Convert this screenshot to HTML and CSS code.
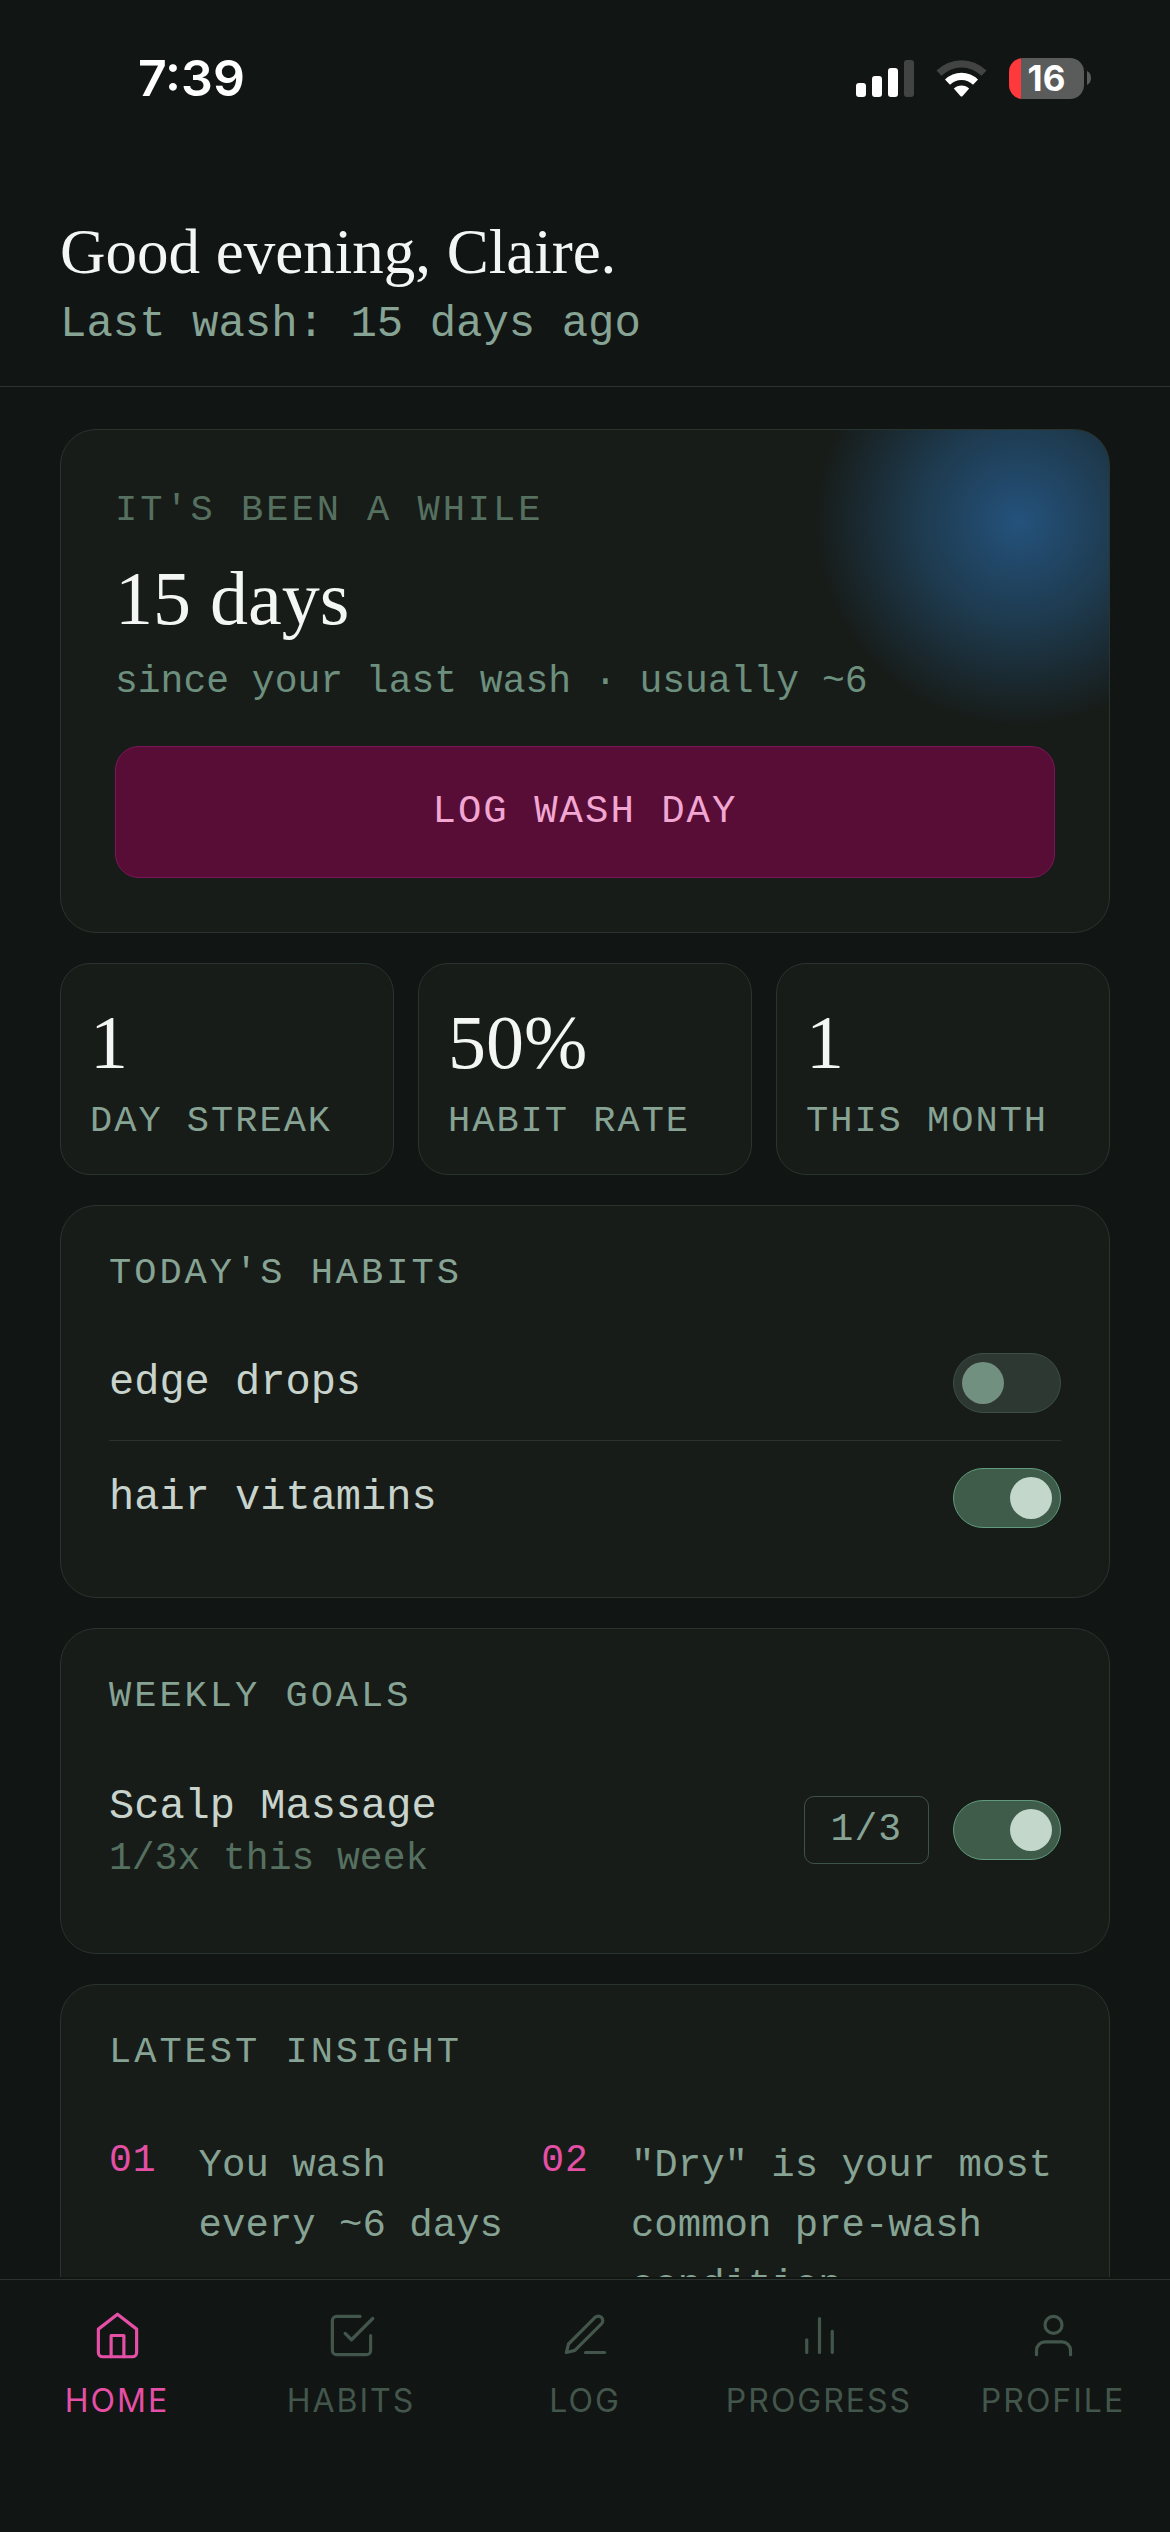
FILE: index.html
```html
<!DOCTYPE html>
<html lang="en">
<head>
    <meta charset="UTF-8">
    <meta name="viewport" content="width=device-width, initial-scale=1.0">
    <title>Wash Day</title>
    <link rel="stylesheet" href="styles.css">
</head>
<body>
    <div class="status-bar">
        <span class="time">7:39</span>
        <div class="status-icons">
            <svg width="58" height="38" viewBox="0 0 58 38" aria-hidden="true">
                <rect x="0" y="24" width="10" height="14" rx="3" fill="#fff"/>
                <rect x="16" y="17" width="10" height="21" rx="3" fill="#fff"/>
                <rect x="32" y="9" width="10" height="29" rx="3" fill="#fff"/>
                <rect x="48" y="1" width="10" height="37" rx="3" fill="#424443"/>
            </svg>
            <svg width="51" height="38" viewBox="0 0 51 38" aria-hidden="true">
                <path d="M0.5 11.5A35.5 35.5 0 0 1 50.5 11.5L45.5 16.8A28.3 28.3 0 0 0 5.5 16.8Z" fill="#424443"/>
                <path d="M9 20.5A23.5 23.5 0 0 1 42 20.5L37 25.7A16.3 16.3 0 0 0 14 25.7Z" fill="#fff"/>
                <path d="M17.8 29.6A11 11 0 0 1 33.2 29.6L26.6 37Q25.5 38.2 24.4 37Z" fill="#fff"/>
            </svg>
            <div class="battery">
                <span class="battery-level">16</span>
                <svg width="4" height="14" viewBox="0 0 4 14" aria-hidden="true">
                    <path d="M0 0Q4 2 4 7T0 14Z" fill="#5a5c5b"/>
                </svg>
            </div>
        </div>
    </div>

    <header>
        <h1>Good evening, Claire.</h1>
        <p>Last wash: 15 days ago</p>
    </header>

    <main>
        <section class="card hero">
            <p class="hero-label">IT'S BEEN A WHILE</p>
            <p class="big">15 days</p>
            <p class="hero-sub">since your last wash · usually ~6</p>
            <button class="log-button" type="button">LOG WASH DAY</button>
        </section>

        <div class="stats">
            <div class="card stat">
                <span class="big">1</span>
                <span class="stat-label">DAY STREAK</span>
            </div>
            <div class="card stat">
                <span class="big">50%</span>
                <span class="stat-label">HABIT RATE</span>
            </div>
            <div class="card stat">
                <span class="big">1</span>
                <span class="stat-label">THIS MONTH</span>
            </div>
        </div>

        <section class="card">
            <h2>TODAY'S HABITS</h2>
            <div class="row">
                <label class="name" for="edge-drops">edge drops</label>
                <input class="toggle" type="checkbox" id="edge-drops">
            </div>
            <div class="row">
                <label class="name" for="hair-vitamins">hair vitamins</label>
                <input class="toggle" type="checkbox" id="hair-vitamins" checked>
            </div>
        </section>

        <section class="card">
            <h2>WEEKLY GOALS</h2>
            <div class="row">
                <div class="goal">
                    <label class="name" for="scalp-massage">Scalp Massage</label>
                    <p class="goal-sub">1/3x this week</p>
                </div>
                <span class="count">1/3</span>
                <input class="toggle" type="checkbox" id="scalp-massage" checked>
            </div>
        </section>

        <section class="card">
            <h2>LATEST INSIGHT</h2>
            <div class="insights">
                <div class="insight">
                    <span class="number">01</span>
                    <p>You wash every ~6 days</p>
                </div>
                <div class="insight">
                    <span class="number">02</span>
                    <p>"Dry" is your most common pre-wash condition</p>
                </div>
            </div>
        </section>
    </main>

    <nav>
        <a class="active" href="#home">
            <svg class="icon" viewBox="0 0 24 24" aria-hidden="true">
                <path d="M3 9l9-7 9 7v11a2 2 0 0 1-2 2H5a2 2 0 0 1-2-2z"/>
                <polyline points="9 22 9 12 15 12 15 22"/>
            </svg>
            HOME
        </a>
        <a href="#habits">
            <svg class="icon" viewBox="0 0 24 24" aria-hidden="true">
                <polyline points="9 11 12 14 22 4"/>
                <path d="M21 12v7a2 2 0 0 1-2 2H5a2 2 0 0 1-2-2V5a2 2 0 0 1 2-2h11"/>
            </svg>
            HABITS
        </a>
        <a href="#log">
            <svg class="icon" viewBox="0 0 24 24" aria-hidden="true">
                <path d="M12 20h9"/>
                <path d="M16.5 3.5a2.121 2.121 0 0 1 3 3L7 19l-4 1 1-4L16.5 3.5z"/>
            </svg>
            LOG
        </a>
        <a href="#progress">
            <svg class="icon" viewBox="0 0 24 24" aria-hidden="true">
                <path d="M18 20V10M12 20V4M6 20v-6"/>
            </svg>
            PROGRESS
        </a>
        <a href="#profile">
            <svg class="icon" viewBox="0 0 24 24" aria-hidden="true">
                <path d="M20 21v-2a4 4 0 0 0-4-4H8a4 4 0 0 0-4 4v2"/>
                <circle cx="12" cy="7" r="4"/>
            </svg>
            PROFILE
        </a>
    </nav>
</body>
</html>
```
FILE: styles.css
```css
* {
    box-sizing: border-box;
}
body {
    margin: 0;
    height: 100vh;
    display: flex;
    flex-direction: column;
    background-color: #111514;
    color: #86a394;
    font-family: "Liberation Mono", monospace;
}
h1, h2, p {
    margin: 0;
    font-weight: 400;
}

/* status bar */
.status-bar {
    height: 156px;
    padding: 0 79px 0 138px;
    display: flex;
    align-items: center;
    justify-content: space-between;
    flex-shrink: 0;
    color: #fff;
    font-family: Inter, sans-serif;
}
.time {
    font-size: 50px;
    font-weight: 600;
}
.status-icons {
    display: flex;
    align-items: center;
    gap: 22px;
}
.battery {
    display: flex;
    align-items: center;
    gap: 3px;
}
.battery-level {
    width: 75px;
    height: 41px;
    border-radius: 14px;
    background: linear-gradient(to right, #ff383c 12px, #5a5c5b 12px);
    font-size: 35px;
    font-weight: 700;
    line-height: 41px;
    text-align: center;
}

header {
    padding: 58px 60px 32px;
    border-bottom: 1px solid #2b332f;
    flex-shrink: 0;
}
header h1 {
    margin-bottom: 4px;
    color: #f3f6f4;
    font-family: "Liberation Serif", serif;
    font-size: 63px;
    line-height: 76px;
}
header p {
    font-size: 44px;
    line-height: 60px;
}

main {
    flex: 1;
    min-height: 0;
    overflow: hidden;
    padding: 42px 60px;
    display: flex;
    flex-direction: column;
    gap: 30px;
}
.card {
    flex-shrink: 0;
    padding: 42px 48px;
    background-color: #171c19;
    border: 1px solid #2a342f;
    border-radius: 36px;
}
.card h2 {
    margin-bottom: 28px;
    font-size: 37px;
    line-height: 50px;
    letter-spacing: 3px;
}
.big {
    color: #f3f6f4;
    font-family: "Liberation Serif", serif;
    font-size: 76px;
    line-height: 84px;
}

/* hero */
.hero {
    padding: 56px 54px 54px;
    background-image: radial-gradient(circle 203px at calc(100% - 90px) 92px, #24527c, #1e3a4e 50%, rgba(30, 58, 78, 0));
}
.hero-label {
    margin-bottom: 22px;
    color: #567060;
    font-size: 37px;
    line-height: 48px;
    letter-spacing: 3px;
}
.hero-sub {
    margin: 18px 0 40px;
    color: #6d8f7e;
    font-size: 38px;
    line-height: 48px;
}
.log-button {
    width: 100%;
    padding: 41px;
    background-color: #570d36;
    border: 1px solid #80145a;
    border-radius: 24px;
    color: #f2a6d2;
    font-family: inherit;
    font-size: 39px;
    line-height: 48px;
    letter-spacing: 2px;
}

/* stats */
.stats {
    display: grid;
    grid-template-columns: repeat(3, 1fr);
    gap: 24px;
    flex-shrink: 0;
}
.stat {
    display: flex;
    flex-direction: column;
    gap: 12px;
    padding: 36px 0 28px 29px;
    border-radius: 30px;
}
.stat-label {
    font-size: 37px;
    line-height: 50px;
    letter-spacing: 2px;
}

/* habits and goals */
.row {
    display: flex;
    align-items: center;
    gap: 24px;
    padding: 27px 0;
}
.row + .row {
    border-top: 1px solid #2b332f;
}
.name {
    flex: 1;
    color: #c8d3cc;
    font-size: 42px;
    line-height: 54px;
}
.goal {
    flex: 1;
    padding-top: 4px;
}
.goal-sub {
    color: #567060;
    font-size: 38px;
    line-height: 50px;
}
.count {
    padding: 9px 26px;
    border: 1px solid #3f5248;
    border-radius: 10px;
    font-size: 38px;
    line-height: 48px;
    letter-spacing: 1px;
}
.toggle {
    appearance: none;
    width: 108px;
    height: 60px;
    margin: 0;
    padding: 0 8px;
    display: flex;
    align-items: center;
    background-color: #2e3833;
    border: 1px solid #3d4f45;
    border-radius: 30px;
}
.toggle::before {
    content: "";
    width: 42px;
    height: 42px;
    border-radius: 50%;
    background-color: #72907f;
}
.toggle:checked {
    justify-content: flex-end;
    background-color: #3f5c4b;
    border-color: #5f9b7c;
}
.toggle:checked::before {
    background-color: #c3d7cb;
}

/* insights */
.insights {
    display: grid;
    grid-template-columns: 11fr 14fr;
    gap: 24px;
    padding: 31px 0 27px;
}
.insight {
    display: flex;
    gap: 42px;
    font-size: 39px;
    line-height: 60px;
}
.number {
    color: #e54fa6;
    font-size: 38px;
    line-height: 50px;
    letter-spacing: 1px;
}

/* bottom navigation */
nav {
    display: grid;
    grid-template-columns: repeat(5, 1fr);
    flex-shrink: 0;
    margin-top: 2px;
    padding: 30px 0 102px;
    border-top: 1px solid #2b332f;
}
nav a {
    display: flex;
    flex-direction: column;
    align-items: center;
    gap: 19px;
    color: #43564b;
    font-family: Inter, sans-serif;
    font-size: 32px;
    line-height: 42px;
    letter-spacing: 2px;
    text-decoration: none;
    height: 120px;
}
nav a.active {
    color: #e54fa6;
}
.icon {
    width: 51px;
    height: 51px;
    fill: none;
    stroke: currentColor;
    stroke-width: 1.5;
    stroke-linecap: round;
    stroke-linejoin: round;
}
```
